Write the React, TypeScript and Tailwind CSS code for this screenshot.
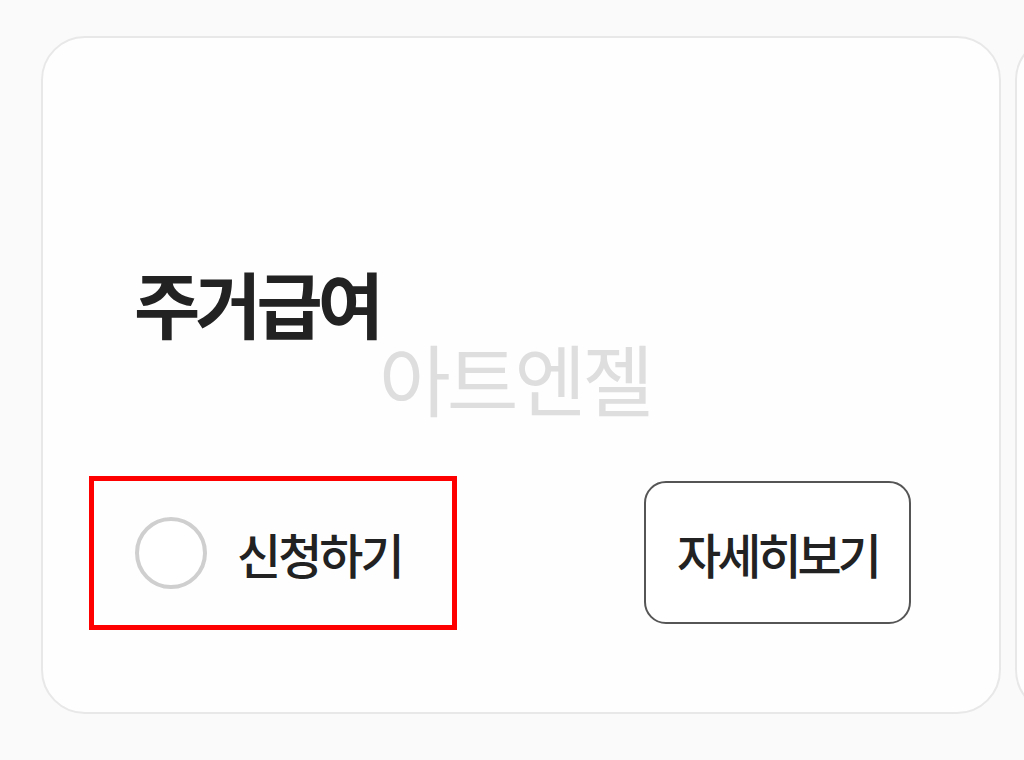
import React from 'react';

const KR = '"Noto Sans CJK KR", "Noto Sans", sans-serif';

function BenefitCard() {
  return (
    <div className="relative w-[960px] h-[678px] shrink-0 rounded-[44px] border-2 border-[#e8e8e8] bg-[#fefefe] flex flex-col">
      {/* watermark */}
      <div
        className="absolute left-[336px] top-[300px] text-[78px] leading-none font-normal text-[#dedede] tracking-[-4px] select-none pointer-events-none"
        style={{ fontFamily: KR }}
      >
        아트엔젤
      </div>

      <h2
        className="mt-[228px] ml-[91px] text-[72px] leading-none font-bold text-[#222] tracking-[-5px]"
        style={{ fontFamily: KR }}
      >
        주거급여
      </h2>

      <div className="mt-[138px] ml-[46px] mr-[88px] flex items-start justify-between">
        <label className="flex items-center w-[368px] h-[154px] border-[5px] border-[#ff0000] pl-[41px] gap-[30px]">
          <span className="w-[72px] h-[72px] rounded-full border-[4px] border-[#cfcfcf] bg-white" />
          <span
            className="text-[48px] leading-none font-medium text-[#222] tracking-[-3px]"
            style={{ fontFamily: KR }}
          >
            신청하기
          </span>
        </label>

        <button
          className="mt-[5px] w-[267px] h-[143px] rounded-[22px] border-2 border-[#555] bg-white flex items-center justify-center text-[48px] leading-none font-medium text-[#222] tracking-[-4px]"
          style={{ fontFamily: KR }}
        >
          자세히보기
        </button>
      </div>
    </div>
  );
}

export default function App() {
  return (
    <div className="w-[1024px] h-[760px] overflow-hidden bg-[#fafafa]">
      <div className="flex gap-[14px] pt-[36px] pl-[41px]">
        <BenefitCard />
        <div className="w-[400px] h-[678px] shrink-0 rounded-[44px] border-2 border-[#e8e8e8] bg-[#fefefe]" />
      </div>
    </div>
  );
}
